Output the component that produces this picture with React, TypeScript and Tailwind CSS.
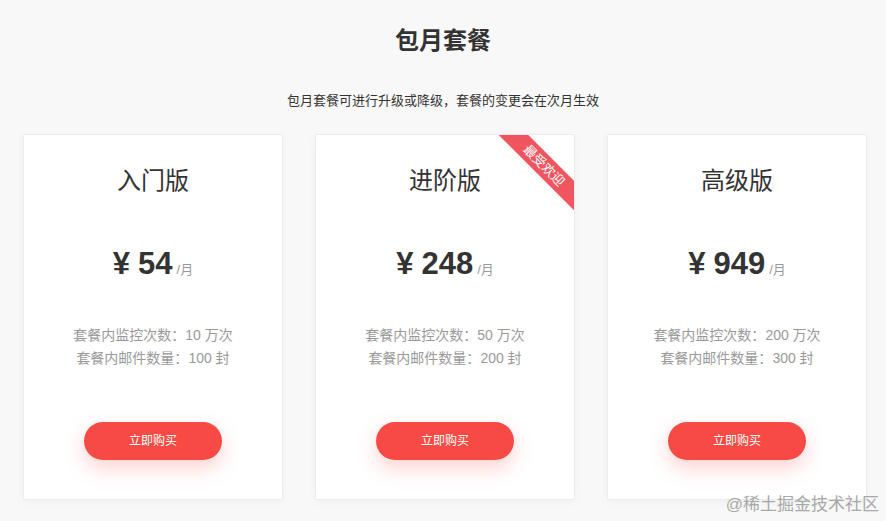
const plans = [
  { name: "入门版", price: 54, count: "10 万次", mail: "100 封" },
  { name: "进阶版", price: 248, count: "50 万次", mail: "200 封", hot: true },
  { name: "高级版", price: 949, count: "200 万次", mail: "300 封" },
];

const font = { fontFamily: '"Liberation Sans", "Noto Sans CJK SC", sans-serif' };

const PlanCard = ({ plan }: { plan: (typeof plans)[number] }) => {
  return (
    <div className="relative overflow-hidden bg-white w-[260px] h-[366px] border border-[#ececec] rounded-[2px] shadow-[0_2px_10px_rgba(0,0,0,0.04)] flex flex-col items-center pt-[29px]">
      {plan.hot && (
        <div className="absolute top-[20px] right-[-30px] w-[120px] h-[21px] bg-[#f0555f] rotate-45 flex items-center justify-center text-white text-[13px] leading-none">
          最受欢迎
        </div>
      )}
      <h2 className="text-[24px] leading-[34px] text-[#333]">{plan.name}</h2>

      <div className="mt-[46px] flex items-baseline h-[40px] leading-[40px] text-[#333] font-bold">
        <span className="text-[31px]">¥</span>
        <span className="text-[31px] ml-[8px]">{plan.price}</span>
        <span className="text-[13px] text-[#999] font-normal ml-[4px]">/月</span>
      </div>

      <div className="mt-[40px] text-[14px] leading-[23px] text-[#999] text-center">
        <p>套餐内监控次数：{plan.count}</p>
        <p>套餐内邮件数量：{plan.mail}</p>
      </div>

      <button className="mt-[52px] w-[138px] h-[38px] rounded-full bg-[#f74a44] text-white text-[12px] shadow-[0_8px_20px_rgba(247,74,68,0.25)]">
        立即购买
      </button>
    </div>
  );
};

const App = () => {
  return (
    <div className="relative w-[886px] h-[521px] overflow-hidden bg-[#f8f8f8]" style={font}>
      <div className="flex flex-col items-center pt-[24px]">
        <h1 className="text-[24px] leading-[34px] font-bold text-[#333]">包月套餐</h1>
        <p className="mt-[34px] text-[13px] leading-[18px] text-[#333]">
          包月套餐可进行升级或降级，套餐的变更会在次月生效
        </p>
      </div>

      <div className="flex gap-[32px] pl-[23px] mt-[24px]">
        {plans.map((plan) => (
          <PlanCard key={plan.name} plan={plan} />
        ))}
      </div>

      {/* watermark */}
      <div className="absolute right-[7px] bottom-[5px] text-[17px] leading-[22px] text-[#a8a8a8]">
        @稀土掘金技术社区
      </div>
    </div>
  );
};

export default App;
